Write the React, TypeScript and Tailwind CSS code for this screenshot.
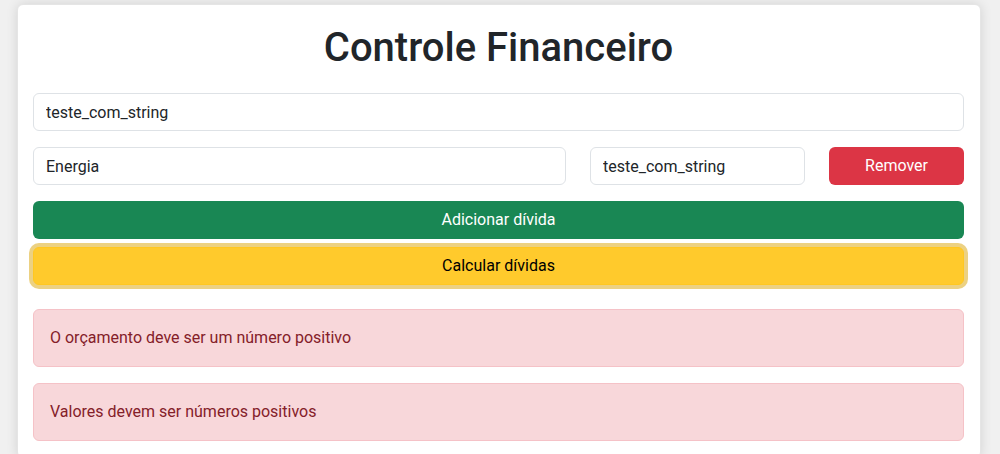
import React from 'react';

const font = { fontFamily: 'Roboto, "Segoe UI", sans-serif' };

const inputCls =
  'h-[38px] w-full rounded-[6px] border border-[#dee2e6] bg-white px-3 text-base text-[#212529] outline-none';

export default function App() {
  return (
    <div className="min-h-[454px] bg-[#f0f0f0] pt-1" style={font}>
      <div className="ml-[17px] w-[964px] rounded-[6px] border border-[#e5e5e5] bg-white pb-4 pl-[15px] pr-4 pt-[19px] shadow-[0_0_12px_rgba(0,0,0,0.12)]">
        <h1 className="mb-[21px] text-center text-[40px] font-medium leading-[48px] text-[#212529]">
          Controle Financeiro
        </h1>

        <input className={inputCls} defaultValue="teste_com_string" />

        <div className="mt-4 flex gap-6">
          <input className={`${inputCls} flex-1`} defaultValue="Energia" />
          <input className={`${inputCls} !w-[215px]`} defaultValue="teste_com_string" />
          <button className="h-[38px] w-[135px] shrink-0 rounded-[6px] bg-[#dc3545] text-base text-white">
            Remover
          </button>
        </div>

        <button className="mt-4 h-[38px] w-full rounded-[6px] bg-[#198754] text-base text-white">
          Adicionar dívida
        </button>

        <button className="mt-2 h-[38px] w-full rounded-[6px] border border-[#ffc720] bg-[#ffca2c] text-base text-black shadow-[0_0_0_4px_rgba(217,164,6,0.5)]">
          Calcular dívidas
        </button>

        <div className="mt-6 flex flex-col gap-4">
          <div className="rounded-[6px] border border-[#f5c2c7] bg-[#f8d7da] p-4 text-base leading-6 text-[#842029]">
            O orçamento deve ser um número positivo
          </div>
          <div className="rounded-[6px] border border-[#f5c2c7] bg-[#f8d7da] p-4 text-base leading-6 text-[#842029]">
            Valores devem ser números positivos
          </div>
        </div>
      </div>
    </div>
  );
}
